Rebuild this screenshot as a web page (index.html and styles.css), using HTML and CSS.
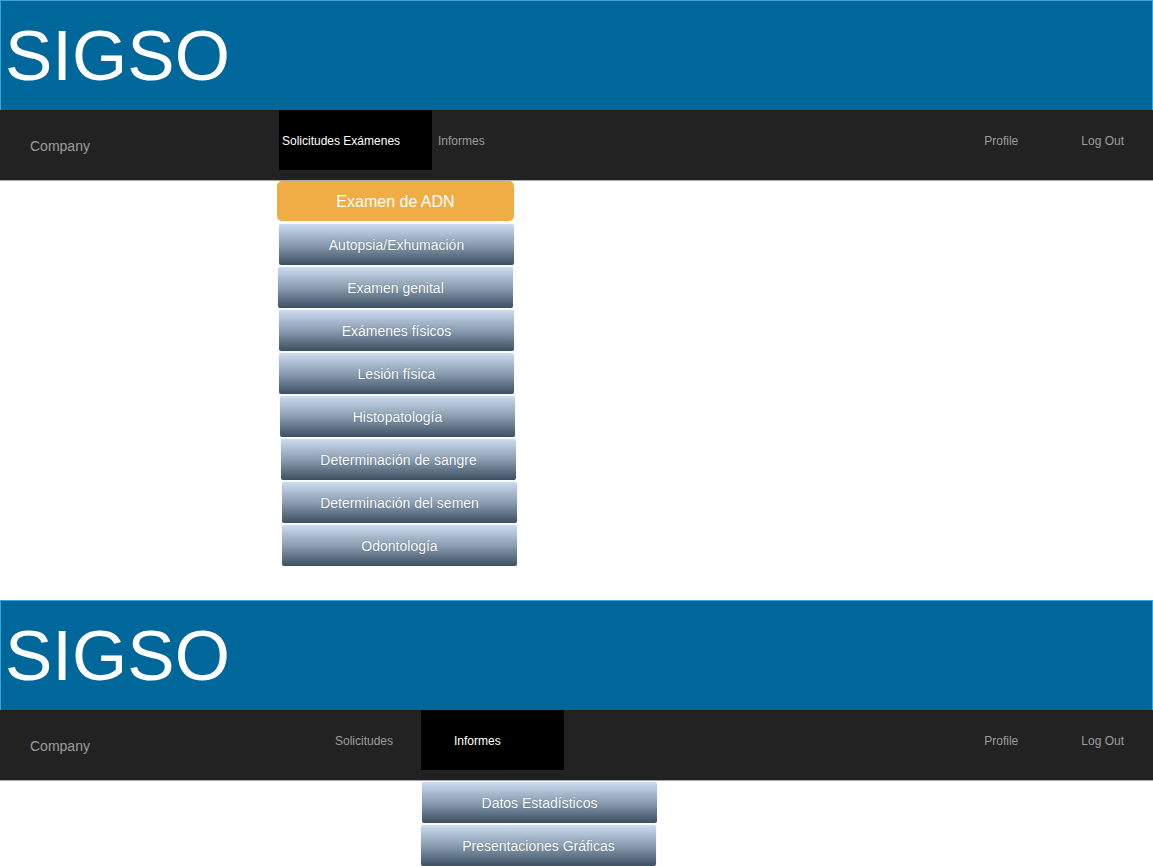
FILE: index.html
```html
<!DOCTYPE html>
<html lang="es">
<head>
<meta charset="utf-8">
<title>SIGSO</title>
<link rel="stylesheet" href="styles.css">
</head>
<body>
<div class="frame frame-a">
  <header class="banner"><h1 class="title">SIGSO</h1></header>
  <nav class="navbar">
    <span class="brand">Company</span>
    <ul class="menu">
      <li class="item item-a1 active">Solicitudes Exámenes</li>
      <li class="item item-a2">Informes</li>
    </ul>
    <ul class="menu-right">
      <li>Profile</li>
      <li>Log Out</li>
    </ul>
  </nav>
  <div class="dropdown dropdown-a">
    <div class="btn-primary">Examen de ADN</div>
    <div class="btn">Autopsia/Exhumación</div>
    <div class="btn">Examen genital</div>
    <div class="btn">Exámenes físicos</div>
    <div class="btn">Lesión física</div>
    <div class="btn">Histopatología</div>
    <div class="btn">Determinación de sangre</div>
    <div class="btn">Determinación del semen</div>
    <div class="btn">Odontología</div>
  </div>
</div>
<div class="frame frame-b">
  <header class="banner"><h1 class="title">SIGSO</h1></header>
  <nav class="navbar">
    <span class="brand">Company</span>
    <ul class="menu">
      <li class="item item-b1">Solicitudes</li>
      <li class="item item-b2 active">Informes</li>
    </ul>
    <ul class="menu-right">
      <li>Profile</li>
      <li>Log Out</li>
    </ul>
  </nav>
  <div class="dropdown dropdown-b">
    <div class="btn">Datos Estadísticos</div>
    <div class="btn">Presentaciones Gráficas</div>
  </div>
</div>
</body>
</html>
```
FILE: styles.css
```css
html, body {
  margin: 0;
  padding: 0;
  background: #ffffff;
  font-family: "Liberation Sans", Arial, sans-serif;
}

.frame {
  display: flex;
  flex-direction: column;
}

.frame-a {
  height: 600px;
}

.banner {
  box-sizing: border-box;
  height: 110px;
  background: #00679a;
  border: 1px solid #36a7d8;
  border-bottom: none;
  padding: 19px 0 0 4px;
}

.title {
  margin: 0;
  font-size: 71px;
  line-height: 71px;
  font-weight: normal;
  color: #ffffff;
}

.navbar {
  height: 70px;
  background: #222222;
  border-bottom: 1px solid #a8a8a8;
  display: flex;
  align-items: flex-start;
}

.brand {
  width: 249px;
  padding-left: 30px;
  padding-top: 1px;
  line-height: 70px;
  font-size: 14px;
  color: #9d9d9d;
}

.menu, .menu-right {
  list-style: none;
  margin: 0;
  padding: 0;
  display: flex;
}

.item {
  box-sizing: border-box;
  height: 60px;
  line-height: 58px;
  padding-top: 2px;
  font-size: 12px;
  color: #9d9d9d;
}

.item.active {
  background: #000000;
  color: #ffffff;
}

.item-a1 { width: 153px; padding-left: 3px; }
.item-a2 { padding-left: 6px; }
.item-b1 { width: 142px; padding-left: 56px; }
.item-b2 { width: 143px; padding-left: 33px; }

.menu-right {
  margin-left: auto;
  gap: 63px;
  padding-right: 29px;
}

.menu-right li {
  line-height: 60px;
  padding-top: 1px;
  font-size: 12px;
  color: #9d9d9d;
}

.dropdown {
  display: flex;
  flex-direction: column;
  align-items: flex-start;
}

.dropdown-a {
  margin-left: 277px;
}

.dropdown-b {
  margin-left: 422px;
  padding-top: 1px;
}

.btn-primary {
  box-sizing: border-box;
  width: 237px;
  height: 40px;
  line-height: 39px;
  padding-top: 1px;
  border-radius: 5px;
  background: #f0ad45;
  color: #ffffff;
  font-size: 16px;
  text-align: center;
  margin-bottom: 1px;
}

.btn {
  box-sizing: border-box;
  width: 235px;
  height: 41px;
  line-height: 40px;
  padding-top: 1px;
  margin-top: 2px;
  border-radius: 2px;
  background: linear-gradient(to bottom, #cddcf1 0%, #8a9db1 50%, #3c5062 100%);
  box-shadow: 0 0 1px 0 #b8c0c8;
  color: #ffffff;
  font-size: 14px;
  text-align: center;
  text-shadow: 0 0 1px rgba(40, 55, 70, 0.6);
}

.dropdown-b .btn:first-child { margin-top: 0; }

.dropdown-a .btn:nth-child(2) { margin-left: 2px; }
.dropdown-a .btn:nth-child(3) { margin-left: 1px; }
.dropdown-a .btn:nth-child(4) { margin-left: 2px; }
.dropdown-a .btn:nth-child(5) { margin-left: 2px; }
.dropdown-a .btn:nth-child(6) { margin-left: 3px; }
.dropdown-a .btn:nth-child(7) { margin-left: 4px; }
.dropdown-a .btn:nth-child(8) { margin-left: 5px; }
.dropdown-a .btn:nth-child(9) { margin-left: 5px; }
.dropdown-b .btn:nth-child(2) { margin-left: -1px; }
```
